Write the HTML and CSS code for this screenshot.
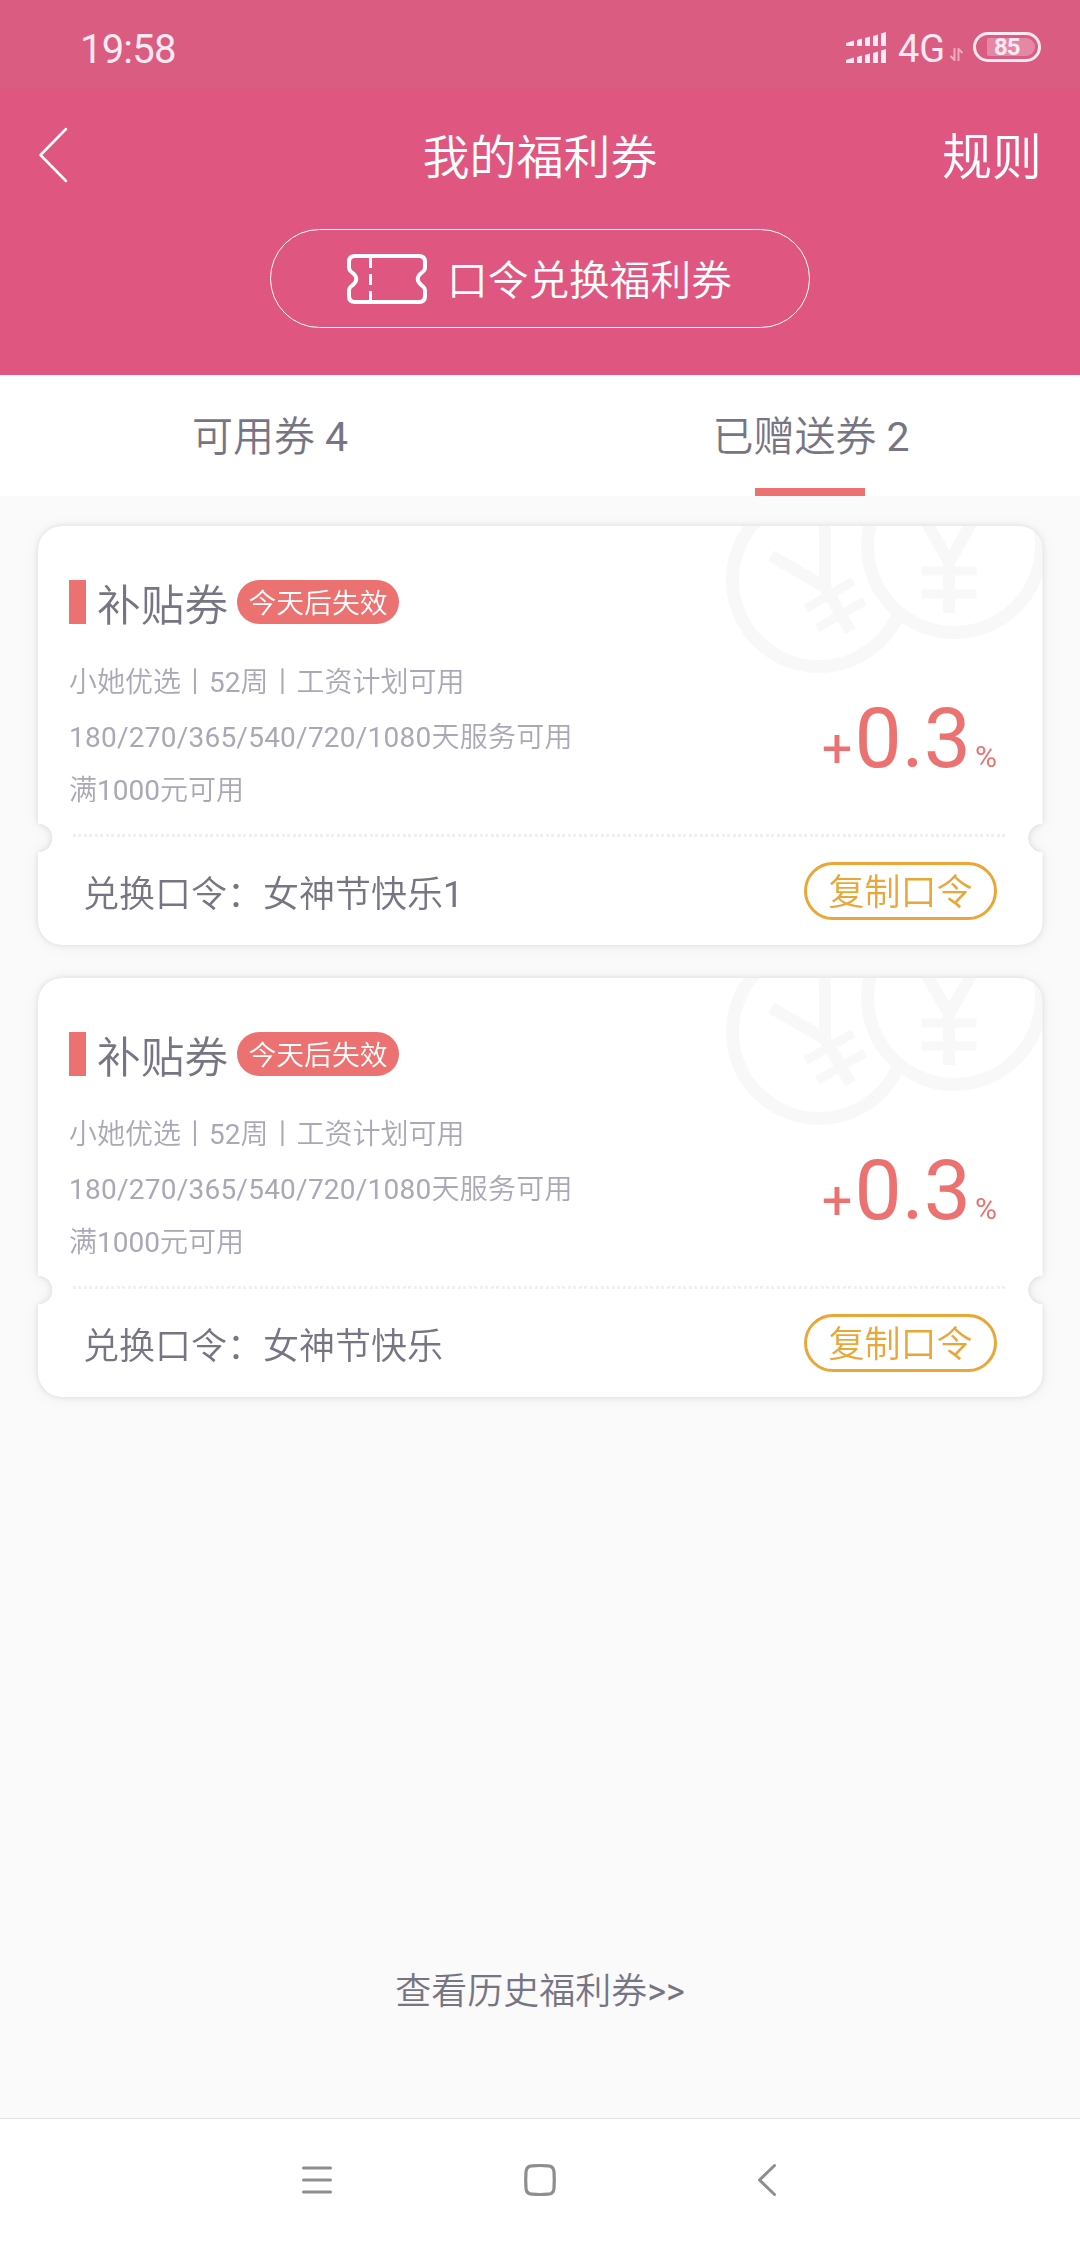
FILE: index.html
```html
<!DOCTYPE html>
<html lang="zh-CN">
<head>
<meta charset="utf-8">
<title>我的福利券</title>
<link rel="stylesheet" href="styles.css">
</head>
<body>
<svg class="defs" width="0" height="0" aria-hidden="true">
  <defs>
    <g id="yen" fill="none" stroke-width="12">
      <path d="M-31-54L0 0L31-54M0-2V51"/>
      <path stroke-width="9" d="M-27.500 9H27.500M-27.500 32H27.500"/>
    </g>
    <g id="coins" stroke="#f8f8f8">
      <circle cx="93" cy="54" r="86.500" fill="none" stroke-width="13"/>
      <use href="#yen" transform="translate(99 61) rotate(-30)"/>
      <circle cx="228.500" cy="19.500" r="87" fill="#fff" stroke-width="13"/>
      <use href="#yen" transform="translate(223 36)"/>
    </g>
  </defs>
</svg>
<div class="screen">
  <header class="top">
    <div class="status">
      <span class="clock">19:58</span>
      <div class="indicators">
        <svg class="signal" width="40" height="31" viewBox="0 0 40 31" fill="currentColor">
          <path d="M0 11L8 8.500V14H0zM11 8L16 6.500V14H11zM19 6L24 4.500V14H19zM27 4L32 2.500V14H27zM35 1.500L40 0V14H35z"/>
          <path d="M0 28L8 25.500V31H0zM11 25L16 23.500V31H11zM19 23L24 21.500V31H19zM27 21L32 19.500V31H27zM35 18.500L40 17V31H35z"/>
        </svg>
        <span class="network">4G</span>
        <svg class="traffic" width="13" height="13" viewBox="0 0 13 13" fill="none" stroke="currentColor" stroke-width="2">
          <path d="M4.500 0V12L.5 8M8.500 13V1L12.500 5"/>
        </svg>
        <span class="battery"><span class="level">85</span></span>
      </div>
    </div>
    <nav class="titlebar">
      <svg class="back" width="30" height="56" viewBox="0 0 30 56" fill="none" stroke="#fff" stroke-width="2.500" stroke-linecap="round" stroke-linejoin="round"><path d="M28 2L2.500 28L28 54"/></svg>
      <h1 class="title">我的福利券</h1>
      <a class="rules">规则</a>
    </nav>
    <div class="redeem">
      <svg width="80" height="50" viewBox="0 0 80 50" fill="none" stroke="#fff">
        <path stroke-width="4" d="M8 2H72Q78 2 78 8V14Q78 16 75.500 18Q66 25 75.500 32Q78 34 78 36V42Q78 48 72 48H8Q2 48 2 42V36Q2 34 4.500 32Q14 25 4.500 18Q2 16 2 14V8Q2 2 8 2Z"/>
        <path stroke-width="3" d="M23.500 3V14M23.500 20V31M23.500 37V47"/>
      </svg>
      <span class="redeem-text">口令兑换福利券</span>
    </div>
  </header>
  <div class="tabs">
    <div class="tab">可用券 4</div>
    <div class="tab active">已赠送券 2</div>
  </div>
  <main class="list">
    <article class="coupon">
      <div class="sheet">
        <svg class="coins" width="320" height="150" viewBox="0 0 320 150"><use href="#coins"/></svg>
        <section class="info">
          <div class="heading"><i class="mark"></i><h2 class="name">补贴券</h2><span class="badge">今天后失效</span></div>
          <div class="detail">
            <div class="terms"><p>小她优选丨52周丨工资计划可用</p><p class="days">180/270/365/540/720/1080天服务可用</p><p>满1000元可用</p></div>
            <div class="rate"><span class="plus">+</span><span class="num">0.3</span><span class="pct">%</span></div>
          </div>
        </section>
        <div class="perforation"></div>
        <section class="code"><span>兑换口令：女神节快乐1</span><button class="copy">复制口令</button></section>
      </div>
    </article>
    <article class="coupon">
      <div class="sheet">
        <svg class="coins" width="320" height="150" viewBox="0 0 320 150"><use href="#coins"/></svg>
        <section class="info">
          <div class="heading"><i class="mark"></i><h2 class="name">补贴券</h2><span class="badge">今天后失效</span></div>
          <div class="detail">
            <div class="terms"><p>小她优选丨52周丨工资计划可用</p><p class="days">180/270/365/540/720/1080天服务可用</p><p>满1000元可用</p></div>
            <div class="rate"><span class="plus">+</span><span class="num">0.3</span><span class="pct">%</span></div>
          </div>
        </section>
        <div class="perforation"></div>
        <section class="code"><span>兑换口令：女神节快乐</span><button class="copy">复制口令</button></section>
      </div>
    </article>
  </main>
  <a class="history">查看历史福利券&gt;&gt;</a>
  <footer class="sysnav">
    <svg width="34" height="34" viewBox="0 0 34 34" fill="none" stroke="#8e8e8e" stroke-width="3" stroke-linecap="round"><path d="M3.500 5H30.500M3.500 17H30.500M3.500 29H30.500"/></svg>
    <svg width="34" height="34" viewBox="0 0 34 34" fill="none" stroke="#8e8e8e" stroke-width="3.200"><path d="M9 2.800Q17 2.200 25 2.800Q30.500 3 31 8.500Q31.600 17 31 25.500Q30.500 31 25 31.200Q17 31.800 9 31.200Q3.500 31 3 25.500Q2.400 17 3 8.500Q3.500 3 9 2.800Z"/></svg>
    <svg class="nav-back" width="34" height="34" viewBox="0 0 34 34" fill="none" stroke="#8e8e8e" stroke-width="3" stroke-linecap="round" stroke-linejoin="round"><path d="M24.500 2.500L9.500 17L24.500 31.500"/></svg>
  </footer>
</div>
</body>
</html>
```
FILE: styles.css
```css
* { box-sizing: border-box; margin: 0; padding: 0; }
body {
  width: 1080px;
  height: 2248px;
  background: #fafafa;
  color: #777583;
  font-family: Roboto, "Noto Sans CJK SC DemiLight", "Noto Sans CJK SC", sans-serif;
  font-weight: 400;
}
.defs { position: absolute; }
h1, h2 { font-weight: inherit; }
svg { display: block; flex: none; }
.screen { display: flex; flex-direction: column; height: 2248px; }

.top { height: 375px; background: #df5780; color: #fff; }
.status {
  display: flex;
  justify-content: space-between;
  height: 89px;
  padding: 0 39px 0 80px;
  background: #da5c81;
  color: #ffe9f2;
}
.clock { font-size: 40px; line-height: 99px; letter-spacing: -.8px; }
.indicators { display: flex; align-items: flex-start; }
.signal { margin-top: 32px; }
.network { margin-left: 12px; width: 51px; font-size: 38px; line-height: 98px; }
.traffic { margin: 48px 0 0 1px; opacity: .55; }
.battery {
  width: 68px;
  height: 30px;
  margin: 32px 0 0 10px;
  padding: 3px 3px 3px 11px;
  border: 3px solid currentColor;
  border-radius: 15px;
}
.level {
  display: block;
  height: 18px;
  padding-left: 7px;
  border-radius: 2px 9px 9px 2px;
  background: #e588a5;
  font-size: 24px;
  font-weight: 700;
  line-height: 19px;
  letter-spacing: -1px;
}
.titlebar {
  display: grid;
  grid-template-columns: 1fr auto 1fr;
  align-items: center;
  height: 132px;
  padding: 0 38px;
}
.title { padding-top: 5px; font-size: 47px; line-height: 60px; font-weight: 350; }
.rules { justify-self: end; padding-top: 5px; font-size: 50px; line-height: 60px; font-weight: 350; }
.redeem {
  display: flex;
  align-items: center;
  gap: 20px;
  width: 540px;
  height: 99px;
  margin: 8px auto 0;
  padding-left: 76px;
  border: 1px solid #fff;
  border-radius: 50px;
  font-size: 40.700px;
  font-weight: 350;
}
.redeem-text { margin-top: -2px; }

.tabs { display: grid; grid-template-columns: 1fr 1fr; height: 121px; background: #fff; }
.tab {
  display: flex;
  flex-direction: column;
  align-items: center;
  padding-top: 8px;
  font-size: 41px;
  line-height: 109px;
}
.tab.active { padding-left: 2px; }
.tab.active::after { content: ""; width: 110px; height: 8px; margin: -4px 2px 0 0; background: #eb7271; }

.list { display: grid; gap: 33px; padding: 30px 37px 0 38px; }
.coupon { filter: drop-shadow(0 0 3px rgba(0, 0, 0, .1)) drop-shadow(0 1px 7px rgba(0, 0, 0, .05)); }
.sheet {
  position: relative;
  height: 419px;
  border-radius: 24px;
  background: #fff;
  overflow: hidden;
  mask: radial-gradient(circle at 0 312px, transparent 14px, #000 14.500px) left / 51% 100% no-repeat,
        radial-gradient(circle at 100% 312px, transparent 14px, #000 14.500px) right / 51% 100% no-repeat;
}
.coins { position: absolute; top: 0; right: -3px; }
.info { position: relative; height: 308px; padding: 54px 46px 0 31px; }
.heading { display: flex; align-items: center; height: 44px; }
.mark { width: 17px; height: 44px; background: #eb7271; }
.name { width: 132px; margin: 7px 8px 0 11px; font-size: 43.700px; line-height: 44px; }
.badge {
  width: 162px;
  height: 44px;
  border-radius: 22px;
  background: #eb7271;
  color: #fff;
  font-size: 27.800px;
  line-height: 48px;
  text-align: center;
}
.detail { display: flex; justify-content: space-between; }
.terms { padding-top: 32px; color: #aaa8b6; font-size: 28px; }
.terms p { height: 54px; line-height: 54px; white-space: nowrap; }
.terms .days { line-height: 56px; letter-spacing: .24px; }
.rate { display: flex; align-items: baseline; height: 98px; margin-top: 66px; color: #eb7271; line-height: 98px; }
.plus { font-size: 54px; }
.num { margin-left: 2px; font-size: 84px; }
.pct { margin-left: 4px; font-size: 30px; }
.perforation {
  height: 3px;
  margin: 0 37px 0 35px;
  background: repeating-linear-gradient(90deg, #f0f0f0 0 3px, transparent 3px 5.500px);
}
.code {
  display: flex;
  align-items: center;
  justify-content: space-between;
  height: 108px;
  padding: 0 46px 0 45px;
  font-size: 36px;
}
.copy {
  width: 193px;
  height: 58px;
  margin-bottom: 1px;
  padding-top: 4px;
  border: 3px solid #eaa636;
  border-radius: 29px;
  background: none;
  color: #eaa636;
  font: inherit;
  line-height: 48px;
}
.history { margin: auto auto 99px; font-size: 36px; line-height: 54px; }
.sysnav {
  display: flex;
  justify-content: center;
  gap: 189px;
  height: 130px;
  padding: 44px 0 0 4px;
  border-top: 1px solid #e2e2e2;
  background: #fff;
}
.nav-back { margin-left: 4px; }
```
